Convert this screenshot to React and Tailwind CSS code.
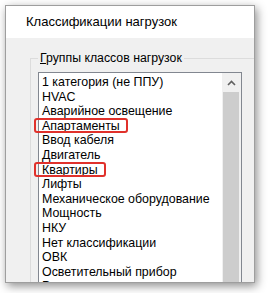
import React from 'react';

const items = [
  '1 категория (не ППУ)',
  'HVAC',
  'Аварийное освещение',
  'Апартаменты',
  'Ввод кабеля',
  'Двигатель',
  'Квартиры',
  'Лифты',
  'Механическое оборудование',
  'Мощность',
  'НКУ',
  'Нет классификации',
  'ОВК',
  'Осветительный прибор',
  'Розетки',
];

const marked = ['Апартаменты', 'Квартиры'];

const App = () => {
  return (
    <div className="min-h-screen bg-white pt-[5px] pl-[5px] font-['Liberation_Sans',Arial,sans-serif] text-black">
      <div className="w-[250px] h-[278px] border border-[#9e9e9e] bg-[#f0f0f0] shadow-[2px_3px_9px_rgba(0,0,0,0.45)] overflow-hidden flex flex-col">
        <div className="h-[32px] shrink-0 bg-white flex items-center pl-[20px] text-[13px]">
          Классификации нагрузок
        </div>

        <div className="flex-1 pl-[24px] pt-[13px]">
          <fieldset className="border-t border-l border-[#dcdcdc] min-w-0 -mr-[4px]">
            <legend className="ml-[7px] px-[2px] text-[12.3px] leading-[14px]">
              <span className="underline">Г</span>руппы классов нагрузок
            </legend>

            <div className="ml-[7px] mt-[7px] w-[204px] h-[300px] border border-[#828790] bg-white flex">
              <ul className="flex-1 min-w-0 pl-[3px] pt-[2px] text-[12.4px]">
                {items.map((item) => (
                  <li key={item} className="h-[14.6px] leading-[14.6px] whitespace-nowrap">
                    <span className="relative">
                      {marked.includes(item) && (
                        <span className="absolute -left-[8px] -right-[8px] -top-[1px] bottom-0 border-2 border-[#e0312b] rounded-[3px]" />
                      )}
                      {item}
                    </span>
                  </li>
                ))}
              </ul>

              <div className="w-[19px] shrink-0 bg-[#f0f0f0] flex flex-col">
                <div className="h-[19px] flex items-center justify-center">
                  <svg width="9" height="6" viewBox="0 0 9 6" fill="none">
                    <path d="M1 5 L4.5 1.5 L8 5" stroke="#606060" strokeWidth="1.6" />
                  </svg>
                </div>
                <div className="ml-[1px] w-[16px] flex-1 bg-[#cdcdcd]" />
              </div>
            </div>
          </fieldset>
        </div>
      </div>
    </div>
  );
};

export default App;
